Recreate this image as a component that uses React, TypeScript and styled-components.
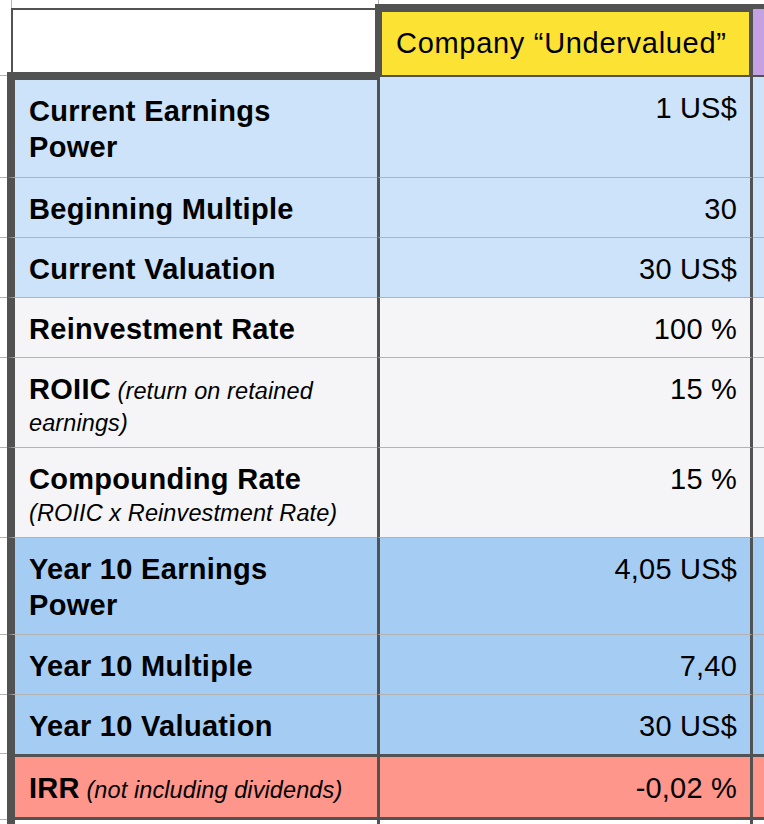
import React from 'react';
import styled, { createGlobalStyle } from 'styled-components';

const DARK = '#525252';
const GRID = '#b3b3b3';

type Tone = 'light' | 'gray' | 'blue' | 'red' | 'white';
const TONE: Record<Tone, string> = {
  light: '#cce3f9',
  gray: '#f5f5f7',
  blue: '#a5cdf4',
  red: '#ff968c',
  white: '#ffffff',
};

type Edge = 'line' | 'dark' | 'none';
const edge = (e: Edge | undefined) =>
  e === 'dark' ? `3px solid ${DARK}` : e === 'none' ? 'none' : `1px solid ${GRID}`;

const GlobalStyle = createGlobalStyle`
  html, body { margin: 0; padding: 0; background: #ffffff; }
  body {
    width: 764px;
    height: 824px;
    overflow: hidden;
    font-family: "Liberation Sans", Arial, Helvetica, sans-serif;
    color: #000000;
  }
`;

const Sheet = styled.div`
  width: 764px;
  height: 824px;
  overflow: hidden;
  display: flex;
  flex-direction: column;
  background: #ffffff;
`;

const HeaderRow = styled.div`
  display: grid;
  grid-template-columns: 7px 368px 378px 11px;
  height: 77px;
  flex: none;
`;

const HeaderGutter = styled.div`
  box-sizing: border-box;
  height: 76px;
  border-bottom: 1px solid ${GRID};
`;

const Corner = styled.div`
  box-sizing: border-box;
  height: 77px;
  border-bottom: 5px solid ${DARK};
  display: flex;
  flex-direction: column;
`;

const CornerStrip = styled.div`
  flex: none;
  height: 8px;
  margin-left: 4px;
  border-left: 1px solid ${GRID};
`;

const CornerBox = styled.div`
  flex: 1;
  margin-left: 4px;
  border-top: 2px solid ${DARK};
  border-left: 2px solid ${DARK};
  background: #ffffff;
`;

const HeadColumn = styled.div`
  display: flex;
  flex-direction: column;
`;

const HeadStrip = styled.div<{ $offset: number }>`
  flex: none;
  height: 4px;
  margin-left: ${(p) => p.$offset}px;
  border-left: 1px solid ${GRID};
`;

const ColumnHead = styled.div`
  box-sizing: border-box;
  flex: 1;
  background: #fce333;
  border-top: 8px solid ${DARK};
  border-left: 7px solid ${DARK};
  border-right: 4px solid ${DARK};
  border-bottom: 2px solid ${DARK};
  display: flex;
  align-items: center;
  padding: 0 0 1px 14px;
  font-size: 29px;
  letter-spacing: 0.7px;
  white-space: nowrap;
`;

const NextHead = styled.div`
  box-sizing: border-box;
  flex: 1;
  background: #c5a0e3;
  border-top: 5px solid ${DARK};
  border-bottom: 2px solid ${DARK};
`;

const Row = styled.div<{ $h: number }>`
  display: grid;
  grid-template-columns: 7px 370px 376px 11px;
  height: ${(p) => p.$h}px;
  flex: none;
`;

const Gutter = styled.div`
  box-sizing: border-box;
  border-bottom: 1px solid ${GRID};
`;

type CellProps = { $tone: Tone; $top?: Edge; $bottom?: Edge };

const LabelCell = styled.div<CellProps>`
  box-sizing: border-box;
  background: ${(p) => TONE[p.$tone]};
  border-left: 8px solid ${DARK};
  border-top: ${(p) => (p.$top ? edge(p.$top) : 'none')};
  border-bottom: ${(p) => edge(p.$bottom)};
  padding: 13px 24px 0 14px;
  font-size: 23.5px;
  line-height: 32px;
  overflow: hidden;
`;

const Strong = styled.b`
  font-weight: 700;
  font-size: 29px;
  line-height: 36px;
  letter-spacing: 0.3px;
`;

const Note = styled.i`
  font-style: italic;
  font-size: 23.5px;
  letter-spacing: 0.1px;
`;

const ValueCell = styled.div<CellProps>`
  box-sizing: border-box;
  background: ${(p) => TONE[p.$tone]};
  border-left: 3px solid ${DARK};
  border-right: 3px solid ${DARK};
  border-top: ${(p) => (p.$top ? edge(p.$top) : 'none')};
  border-bottom: ${(p) => edge(p.$bottom)};
  padding: 13px 13px 0 0;
  text-align: right;
  font-size: 29px;
  line-height: 36px;
  letter-spacing: 0.2px;
  white-space: nowrap;
`;

const StubCell = styled.div<CellProps>`
  box-sizing: border-box;
  background: ${(p) => TONE[p.$tone]};
  border-top: ${(p) => (p.$top ? edge(p.$top) : 'none')};
  border-bottom: ${(p) => edge(p.$bottom)};
`;

type RowData = {
  h: number;
  tone: Tone;
  label: React.ReactNode;
  value: string;
  labelTop?: Edge;
  top?: Edge;
  bottom?: Edge;
};

const rows: RowData[] = [
  {
    h: 101,
    tone: 'light',
    labelTop: 'dark',
    label: (
      <Strong>
        Current Earnings
        <br />
        Power
      </Strong>
    ),
    value: '1 US$',
  },
  { h: 60, tone: 'light', label: <Strong>Beginning Multiple</Strong>, value: '30' },
  { h: 60, tone: 'light', label: <Strong>Current Valuation</Strong>, value: '30 US$' },
  { h: 60, tone: 'gray', label: <Strong>Reinvestment Rate</Strong>, value: '100 %' },
  {
    h: 90,
    tone: 'gray',
    label: (
      <>
        <Strong>ROIIC</Strong> <Note>(return on retained earnings)</Note>
      </>
    ),
    value: '15 %',
  },
  {
    h: 90,
    tone: 'gray',
    label: (
      <>
        <Strong>Compounding Rate</Strong>
        <br />
        <Note>(ROIIC x Reinvestment Rate)</Note>
      </>
    ),
    value: '15 %',
  },
  {
    h: 97,
    tone: 'blue',
    label: (
      <Strong>
        Year 10 Earnings
        <br />
        Power
      </Strong>
    ),
    value: '4,05 US$',
  },
  { h: 60, tone: 'blue', label: <Strong>Year 10 Multiple</Strong>, value: '7,40' },
  { h: 59, tone: 'blue', bottom: 'none', label: <Strong>Year 10 Valuation</Strong>, value: '30 US$' },
  {
    h: 66,
    tone: 'red',
    top: 'dark',
    bottom: 'dark',
    label: (
      <>
        <Strong>IRR</Strong> <Note>(not including dividends)</Note>
      </>
    ),
    value: '-0,02 %',
  },
];

export default function App() {
  return (
    <Sheet>
      <GlobalStyle />
      <HeaderRow>
        <HeaderGutter />
        <Corner>
          <CornerStrip />
          <CornerBox />
        </Corner>
        <HeadColumn>
          <HeadStrip $offset={3} />
          <ColumnHead>Company “Undervalued”</ColumnHead>
        </HeadColumn>
        <HeadColumn>
          <HeadStrip $offset={0} style={{ borderLeft: 'none' }} />
          <NextHead />
        </HeadColumn>
      </HeaderRow>
      {rows.map((r, i) => (
        <Row key={i} $h={r.h}>
          <Gutter />
          <LabelCell $tone={r.tone} $top={r.labelTop ?? r.top} $bottom={r.bottom}>
            {r.label}
          </LabelCell>
          <ValueCell $tone={r.tone} $top={r.top} $bottom={r.bottom}>
            {r.value}
          </ValueCell>
          <StubCell $tone={r.tone} $top={r.top} $bottom={r.bottom} />
        </Row>
      ))}
      <Row $h={10}>
        <div />
        <LabelCell $tone="white" $bottom="none" />
        <ValueCell $tone="white" $bottom="none" />
        <StubCell $tone="white" $bottom="none" />
      </Row>
    </Sheet>
  );
}
